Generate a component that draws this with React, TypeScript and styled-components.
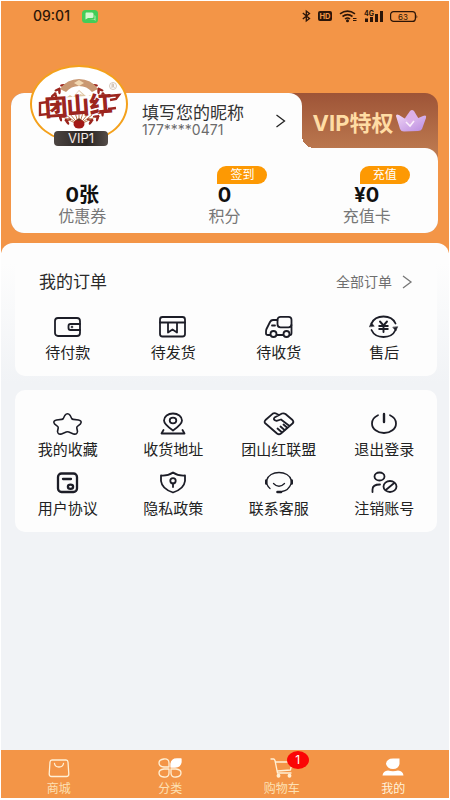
import React from "react";
import styled, { createGlobalStyle } from "styled-components";

const GlobalStyle = createGlobalStyle`
  * { box-sizing: border-box; }
  body {
    margin: 0;
    background: #fff;
    font-family: "Inter", "Noto Sans CJK SC", sans-serif;
    color: #222;
  }
  button {
    margin: 0;
    padding: 0;
    border: 0;
    background: none;
    font: inherit;
    color: inherit;
    cursor: pointer;
  }
  a { color: inherit; text-decoration: none; }
  h1, h2, p { margin: 0; font-weight: 400; }
  svg { display: block; flex: none; overflow: visible; }
`;

const Page = styled.div`
  display: flex;
  flex-direction: column;
  min-height: 100vh;
  padding: 1px 1px 2px;
  background: #fff;
`;

const Hero = styled.header`
  background: #f39547;
  padding-bottom: 20px;
`;

const StatusBar = styled.div`
  display: flex;
  align-items: center;
  justify-content: space-between;
  height: 30px;
  padding: 0 31px 0 32px;
  color: #2b1508;
`;

const StatusGroup = styled.div<{ $gap: number }>`
  display: flex;
  align-items: center;
  gap: ${(p) => p.$gap}px;
`;

const Clock = styled.span`
  font-size: 14px;
  font-weight: 500;
  line-height: 20px;
`;

const ProfileCard = styled.section`
  position: relative;
  margin: 62px 11px 0 10px;
  border-radius: 13px;
  background: linear-gradient(#9e5437, #bd7a50 60px);
`;

const TopRow = styled.div`
  display: flex;
  height: 55px;
`;

const NameLink = styled.button`
  flex: 1;
  display: flex;
  align-items: center;
  justify-content: space-between;
  padding: 0 16px 0 131px;
  border-radius: 13px 13px 0 0;
  background: #fdfdfd;
  text-align: left;
`;

const Nickname = styled.span`
  display: block;
  font-size: 17px;
  line-height: 18px;
  color: #333;
`;

const Phone = styled.span`
  display: block;
  font-size: 14px;
  line-height: 16px;
  color: #6b6b6b;
`;

const VipLink = styled.button`
  position: relative;
  flex: none;
  display: flex;
  align-items: center;
  justify-content: center;
  gap: 2px;
  width: 136px;
  color: #ffdca4;
  font-size: 22px;
  font-weight: 700;
  white-space: nowrap;

  &::before {
    content: "";
    position: absolute;
    left: 0;
    bottom: 0;
    width: 12px;
    height: 12px;
    background: radial-gradient(circle at 100% 0, transparent 12px, #fdfdfd 12px);
  }
`;

const Avatar = styled.div`
  position: absolute;
  left: 19px;
  top: -28px;
  width: 98px;
  height: 78px;
  border: 2px solid #f4a11c;
  border-radius: 50%;
  background: #fff;
`;

const VipBadge = styled.span`
  position: absolute;
  left: 22px;
  bottom: -5px;
  width: 54px;
  border-radius: 4px;
  background: linear-gradient(90deg, #4c4542, #272220 60%, #554d49);
  color: #f3e9e4;
  font-size: 13px;
  line-height: 15px;
  text-align: center;
`;

const Stats = styled.div`
  display: grid;
  grid-template-columns: repeat(3, 1fr);
  padding: 18px 0 7px;
  border-radius: 0 13px 13px 13px;
  background: #fdfdfd;
`;

const Stat = styled.div`
  display: flex;
  flex-direction: column;
  align-items: center;
`;

const StatTag = styled.button`
  width: 50px;
  height: 18px;
  margin-left: 36px;
  border-radius: 9px 9px 9px 0;
  background: #fd9903;
  color: #fff;
  font-size: 12px;
  line-height: 18px;
`;

const TagSpace = styled.span`
  height: 18px;
`;

const StatValue = styled.strong`
  font-size: 20px;
  font-weight: 700;
  line-height: 22px;
  color: #111;
`;

const StatLabel = styled.span`
  font-size: 16px;
  line-height: 20px;
  color: #777;
`;

const Sheet = styled.main`
  flex: 1;
  margin-top: -10px;
  padding: 18px 12px 24px 14px;
  border-radius: 12px 12px 0 0;
  background: linear-gradient(#fdfdfd 20px, #f1f3f6 140px);
`;

const Card = styled.section`
  border-radius: 10px;
  background: #fdfdfd;

  & + & { margin-top: 14px; }
`;

const CardHead = styled.div`
  display: flex;
  align-items: center;
  justify-content: space-between;
  padding: 10px 25px 0 24px;
`;

const CardTitle = styled.h2`
  font-size: 17px;
  line-height: 22px;
  color: #2a2a2a;
`;

const MoreLink = styled.a`
  display: flex;
  align-items: center;
  gap: 10px;
  font-size: 14px;
  line-height: 20px;
  color: #6f6f6f;
`;

const EntryGrid = styled.div<{ $top: number }>`
  display: grid;
  grid-template-columns: repeat(4, 1fr);
  row-gap: 11px;
  padding: ${(p) => p.$top}px 0 13px;
`;

const Entry = styled.button`
  display: flex;
  flex-direction: column;
  align-items: center;
  gap: 4px;
  font-size: 15px;
  line-height: 20px;
  color: #222;
  white-space: nowrap;
`;

const TabBar = styled.nav`
  display: grid;
  grid-template-columns: repeat(4, 1fr);
  padding-left: 2px;
  background: #f39547;
`;

const Tab = styled.a<{ $active?: boolean }>`
  display: flex;
  flex-direction: column;
  align-items: center;
  gap: 2px;
  padding: 7px 0 1px;
  font-size: 12px;
  line-height: 16px;
  color: ${(p) => (p.$active ? "#fff3dc" : "#fde0b4")};
`;

const TabIcon = styled.span`
  position: relative;
  color: #fff0d6;
`;

const Count = styled.span`
  position: absolute;
  left: 18px;
  top: -6px;
  width: 22px;
  height: 18px;
  border-radius: 50%;
  background: #fb0505;
  color: #fff;
  font-size: 12px;
  line-height: 18px;
  text-align: center;
`;

const LineSvg = ({ children }: { children: React.ReactNode }) => (
  <svg width="30" height="24" viewBox="0 0 30 24" fill="none" stroke="#1c1d27" strokeWidth="1.8" strokeLinecap="round" strokeLinejoin="round" aria-hidden="true">
    {children}
  </svg>
);

const TabSvg = ({ children }: { children: React.ReactNode }) => (
  <svg width="26" height="22" viewBox="0 0 26 22" fill="none" stroke="currentColor" strokeWidth="1.3" strokeLinecap="round" strokeLinejoin="round" aria-hidden="true">
    {children}
  </svg>
);

const Chevron = ({ color, width }: { color: string; width: number }) => (
  <svg width={width} height="14" viewBox="0 0 10 14" fill="none" stroke={color} strokeWidth="1.3" aria-hidden="true">
    <path d="M1 1 9 7 1 13" />
  </svg>
);

const orders = [
  {
    label: "待付款",
    icon: (
      <>
        <rect x="2" y="3" width="25" height="18" rx="3" />
        <path d="M27 9H17.5q-2 0-2 2v2q0 2 2 2H27" />
        <circle cx="19" cy="12" r=".4" />
      </>
    ),
  },
  {
    label: "待发货",
    icon: (
      <>
        <rect x="2" y="2" width="25" height="19.5" rx="2.5" />
        <path d="M2 7.500H27M10 7.500V17.500L14.500 14.500 19 17.500V7.500" />
      </>
    ),
  },
  {
    label: "待收货",
    icon: (
      <>
        <rect x="13.5" y="1.8" width="14" height="10.5" rx="3" />
        <path d="M13.500 5H9Q7 5 6 7L2.500 14Q2 15 2 17V18.500Q2 20 4 20H6M13 20H19M26 20Q27.500 20 27.500 18V10M8 10.500H11" />
        <circle cx="9.5" cy="19" r="3" />
        <circle cx="22.5" cy="19" r="3" />
      </>
    ),
  },
  {
    label: "售后",
    icon: (
      <>
        <path d="M2.500 8.500C4.500 4 9 1.500 14.500 1.500S24.500 4 26.500 8.500M2.500 15C4.500 19.500 9 22 14.500 22S24.500 19.500 26.500 15" />
        <path d="M.500 11.500 2.300 7.500 5 11ZM24 12.500 26.800 16 28.500 12Z" fill="#1c1d27" strokeWidth=".6" />
        <path strokeWidth="1.9" d="M11 6.500 14.500 10.500 18 6.500M14.500 10.500V17M10.200 11H18.800M10.200 14H18.800" />
      </>
    ),
  },
];

const services = [
  {
    label: "我的收藏",
    icon: <path strokeWidth="1.6" d="M11.800 3.500Q14.500 0 17.200 3.500L18.700 6.500Q19.200 7.300 20.300 7.400L25.500 8Q29.500 9 27.500 11.800L24.300 14.500Q23.600 15.200 23.800 16L24.500 19.500Q24 23 20.500 21.900L15.800 20Q14.500 19.500 13.200 20L8.500 21.900Q5 23 4.500 19.500L5.200 16Q5.400 15.200 4.700 14.500L1.500 11.800Q-.500 9 3.500 8L8.700 7.400Q9.800 7.300 10.300 6.500Z" />,
  },
  {
    label: "收货地址",
    icon: (
      <>
        <path d="M15 18.500C10 15 6 12 6 8.500 6 4.500 10 1.500 15 1.500S24 4.500 24 8.500C24 12 20 15 15 18.500Z" />
        <ellipse cx="15" cy="8.5" rx="3.3" ry="2.8" />
        <path d="M5.500 18 3.500 21.500H26.500L24.500 18" />
      </>
    ),
  },
  {
    label: "团山红联盟",
    icon: (
      <>
        <path d="M15 3 11.500 1.300Q10 .800 8.500 1.800L1.500 8Q-.300 10 1.500 11.500L13 21.500Q15 23 17 21.500L28.500 11.500Q30.200 10 28.500 8L21.500 2Q20 1 18 1.500L10.500 5.500Q8.500 8 12.500 8.800L17 7.500 25.500 14" />
        <path d="M13.500 16.500 17.500 20M16.500 14.500 20.500 18M19.500 12.500 23.300 15.700" />
      </>
    ),
  },
  {
    label: "退出登录",
    icon: (
      <>
        <path d="M9 3.200C5 5 3 8 3 11.500 3 17 8.500 21 15 21S27 17 27 11.500C27 8 25 5 21 3.200" />
        <path strokeWidth="2.4" d="M15 2V10" />
      </>
    ),
  },
  {
    label: "用户协议",
    icon: (
      <g strokeWidth="2.3">
        <rect x="5" y="2.5" width="19" height="18.5" rx="3.5" />
        <path d="M10 8H18" />
        <ellipse cx="17.5" cy="15.8" rx="2.6" ry="2.1" />
      </g>
    ),
  },
  {
    label: "隐私政策",
    icon: (
      <>
        <path d="M15 1.500Q20 5 27 4.500V10Q26 18 15 21.500 4 18 3 10V4.500Q10 5 15 1.500Z" />
        <circle cx="15" cy="9.8" r="2.7" />
        <path d="M15 12.500V16" />
      </>
    ),
  },
  {
    label: "联系客服",
    icon: (
      <>
        <path strokeWidth="1.3" d="M2.800 9C4 4.500 9 1.500 15 1.500S26 4.500 27.200 9M27 13Q24.500 19.500 18 20.500M9.500 12.500Q15 18 20.500 12.500" />
        <path strokeWidth="1.3" d="M2.800 13Q4 16 6 17.500" />
        <path strokeWidth="2.6" d="M2.300 9.500V12.500M27.700 9.500V12.500M13.500 21H17" />
      </>
    ),
  },
  {
    label: "注销账号",
    icon: (
      <>
        <ellipse cx="10.5" cy="5.5" rx="5" ry="4" />
        <path d="M3.500 21V18.500Q3.500 13.500 11 13.500" />
        <ellipse cx="21" cy="15.5" rx="6.5" ry="5.5" />
        <path d="M16.800 19 25.200 12" />
      </>
    ),
  },
];

const Laurel = () => (
  <g fill="#9c251e">
    {[0, 1, 2, 3, 4, 5, 6, 7].map((i) => {
      const t = ((i * 17 + 112) * Math.PI) / 180;
      const x = 47 + Math.cos(t) * 26;
      const y = 36 + Math.sin(t) * 20;
      return (
        <g key={i} transform={`translate(${x} ${y}) rotate(${i * 17 + 22})`}>
          <ellipse cx="-1" cy="-2" rx="3.4" ry="1.3" transform="rotate(-35)" />
          <ellipse cx="-1" cy="2" rx="3.4" ry="1.3" transform="rotate(35)" />
        </g>
      );
    })}
  </g>
);

const BrandLogo = () => (
  <svg width="94" height="74" viewBox="0 0 94 74" role="img" aria-label="团山红">
    <Laurel />
    <g transform="matrix(-1 0 0 1 94 0)"><Laurel /></g>
    <path d="M28 22Q35 12 47 12T66 22L60 25Q55 19 47 19T34 25Z" fill="#c99872" />
    <path d="m47 13 5 3-5 3-5-3Z" fill="#f2d9b3" />
    <path d="M28 35 38 28 41 30 47 23 55 30 58 28 67 35Z" fill="#e0c7a5" />
    <path d="m40 31 7-7 4 4-3-1-2 3-2-2Z" fill="#fff" />
    <path d="M47 58 31 50M47 58 34 48M47 58 38 47M47 58 43 46M47 58V46M47 58 51 46M47 58 56 47M47 58 60 48M47 58 63 50" stroke="#bd7a4c" strokeWidth="1" />
    <path d="M12 32 82 27V45L12 50Z" fill="#fff" />
    <path d="M16 35 8 36V48L16 47M76 29 87 28 84 32 78 33M76 42 84 41" stroke="#9c251e" strokeWidth="2.4" fill="none" />
    <g transform="rotate(-4 47 39)" fontFamily="Noto Sans CJK SC, sans-serif" fontWeight="900" fontSize="23" fill="#9c251e" textAnchor="middle">
      <text x="24 46 69" y="47">团山红</text>
    </g>
    <ellipse cx="47" cy="57" rx="5.5" ry="4.5" fill="#a31916" />
    <path d="m44 53 3 1 3-1-2-1-1-1-1 1Z" fill="#6d3018" />
    <circle cx="81" cy="19" r="3.5" fill="none" stroke="#c4b19f" strokeWidth=".7" />
    <path d="M80 21V17H81.300Q82.500 18 81.300 19H80M81.300 19 82.400 21" fill="none" stroke="#b19c88" strokeWidth=".6" />
  </svg>
);

const Crown = () => (
  <svg width="32" height="23" viewBox="0 0 32 23" aria-hidden="true">
    <defs>
      <linearGradient id="crown" x1="0" y1="0" x2="1" y2="1">
        <stop offset="0" stopColor="#f0d5f5" />
        <stop offset="1" stopColor="#b98ae0" />
      </linearGradient>
    </defs>
    <path d="M8 12 15 2Q17 0 19 2L25 12 22 20H10Z" fill="#dcb0e8" />
    <path d="M1 7Q1 4.500 4 6L12 11 16 15 21 10 28 7Q32 5.500 31 9L27 20Q26 22 23 22L9 22.500Q6 22.500 5 20Z" fill="url(#crown)" />
    <path d="m11 13 4 4 4-5" fill="none" stroke="#fbeefb" strokeWidth="1.6" />
  </svg>
);

export default function App() {
  return (
    <>
      <GlobalStyle />
      <Page>
        <Hero>
          <StatusBar>
            <StatusGroup $gap={12}>
              <Clock>09:01</Clock>
              <svg width="16" height="13" viewBox="0 0 16 13" aria-hidden="true">
                <rect width="16" height="13" rx="3.5" fill="#43cd58" />
                <path d="M4 2.500H10Q11.500 2.500 11.500 4V7Q11.500 8 10 8H6L3.500 9.500V4Q3.500 2.500 4 2.500Z" fill="#d5f7cf" />
                <path d="M12.500 5V9H7L12 9.500 13.500 11V6Z" fill="#b6edae" />
              </svg>
            </StatusGroup>
            <StatusGroup $gap={7}>
              <svg width="9" height="12" viewBox="0 0 9 12" fill="none" stroke="#2b1508" strokeWidth="1.3" aria-hidden="true">
                <path d="M.800 3 7.500 8.500 4.300 11V1L7.500 3.500.800 9" />
              </svg>
              <svg width="14" height="10" viewBox="0 0 14 10" aria-hidden="true">
                <rect width="14" height="10" rx="2" fill="#2b1508" />
                <text x="7" y="7.7" textAnchor="middle" fontFamily="Inter, sans-serif" fontWeight="700" fontSize="7.5" fill="#f39547">HD</text>
              </svg>
              <svg width="18" height="12" viewBox="0 0 18 12" fill="none" stroke="#2b1508" strokeWidth="1.6" aria-hidden="true">
                <path d="M1 3.800Q8.500-1.500 16 3.800M3.500 6.500Q8.500 2.800 13.500 6.500M6 9Q8.500 7 11 9" />
                <circle cx="8.5" cy="10.7" r=".7" />
                <path strokeWidth="1.2" d="M14 8.500H17.500M14 10.500H17.500" />
              </svg>
              <svg width="19" height="12" viewBox="0 0 19 12" aria-hidden="true">
                <text x="0" y="6" fontFamily="Inter, sans-serif" fontWeight="700" fontSize="7" fill="#2b1508">4G</text>
                <path d="M1 8.500H4V12H1ZM6 7H9V12H6ZM11 4H14V12H11ZM16 1H19V12H16Z" fill="#2b1508" />
              </svg>
              <svg width="28" height="11" viewBox="0 0 28 11" aria-hidden="true">
                <rect x=".6" y=".6" width="24.8" height="9.8" rx="3" fill="none" stroke="#2b1508" strokeWidth="1.2" />
                <path d="M26.500 3.500Q28 5.500 26.500 7.500Z" fill="#2b1508" />
                <text x="13" y="8.5" textAnchor="middle" fontFamily="Inter, sans-serif" fontSize="8" fill="#2b1508">63</text>
              </svg>
            </StatusGroup>
          </StatusBar>

          <ProfileCard>
            <TopRow>
              <NameLink>
                <span>
                  <Nickname>填写您的昵称</Nickname>
                  <Phone>177****0471</Phone>
                </span>
                <Chevron color="#222" width={11} />
              </NameLink>
              <VipLink>
                VIP特权
                <Crown />
              </VipLink>
            </TopRow>
            <Stats>
              <Stat>
                <TagSpace />
                <StatValue>0张</StatValue>
                <StatLabel>优惠券</StatLabel>
              </Stat>
              <Stat>
                <StatTag>签到</StatTag>
                <StatValue>0</StatValue>
                <StatLabel>积分</StatLabel>
              </Stat>
              <Stat>
                <StatTag>充值</StatTag>
                <StatValue>¥0</StatValue>
                <StatLabel>充值卡</StatLabel>
              </Stat>
            </Stats>
            <Avatar>
              <BrandLogo />
              <VipBadge>VIP1</VipBadge>
            </Avatar>
          </ProfileCard>
        </Hero>

        <Sheet>
          <Card>
            <CardHead>
              <CardTitle>我的订单</CardTitle>
              <MoreLink href="#orders">
                全部订单
                <Chevron color="#777" width={10} />
              </MoreLink>
            </CardHead>
            <EntryGrid $top={22}>
              {orders.map((o) => (
                <Entry key={o.label}>
                  <LineSvg>{o.icon}</LineSvg>
                  {o.label}
                </Entry>
              ))}
            </EntryGrid>
          </Card>
          <Card>
            <EntryGrid $top={22}>
              {services.map((s) => (
                <Entry key={s.label}>
                  <LineSvg>{s.icon}</LineSvg>
                  {s.label}
                </Entry>
              ))}
            </EntryGrid>
          </Card>
        </Sheet>

        <TabBar>
          <Tab href="#mall">
            <TabIcon>
              <TabSvg>
                <path d="M6 3H20Q21.800 3 22 5L22.800 17Q22.800 19.500 20.500 19.500H5.500Q3.200 19.500 3.200 17L4 5Q4.200 3 6 3ZM8.500 6.500Q9 10 13 10T17.500 6.500" />
              </TabSvg>
            </TabIcon>
            商城
          </Tab>
          <Tab href="#category">
            <TabIcon>
              <TabSvg>
                <path d="M12 10H7Q2 9.500 2 6T7 2 12 6ZM12 12H7Q2 12.500 2 16T7 20 12 16ZM14 12H19Q24 12.500 24 16T19 20 14 16Z" />
                <path d="M14 10V7Q14.500 2 20 2H24V5Q23.500 10 18 10Z" fill="#fff" stroke="#fff" />
              </TabSvg>
            </TabIcon>
            分类
          </Tab>
          <Tab href="#cart">
            <TabIcon>
              <TabSvg>
                <path d="M2 2H4.500Q5.500 2 6 3.500L8.500 16H22M7 5H23L21.500 13 8.500 14" />
                <circle cx="9.5" cy="18.8" r="1.3" fill="currentColor" />
                <circle cx="20.5" cy="18.8" r="1.3" fill="currentColor" />
              </TabSvg>
              <Count>1</Count>
            </TabIcon>
            购物车
          </Tab>
          <Tab href="#me" $active>
            <TabIcon>
              <TabSvg>
                <path d="M6 7Q6.500 1.500 13 1.500H19.500V7Q18.500 12 13 12T6 7ZM2.500 18.500Q3 14 8 13.500 13 15 18 13.500 23 14 23.500 18.500Z" fill="#fff" stroke="none" />
              </TabSvg>
            </TabIcon>
            我的
          </Tab>
        </TabBar>
      </Page>
    </>
  );
}
